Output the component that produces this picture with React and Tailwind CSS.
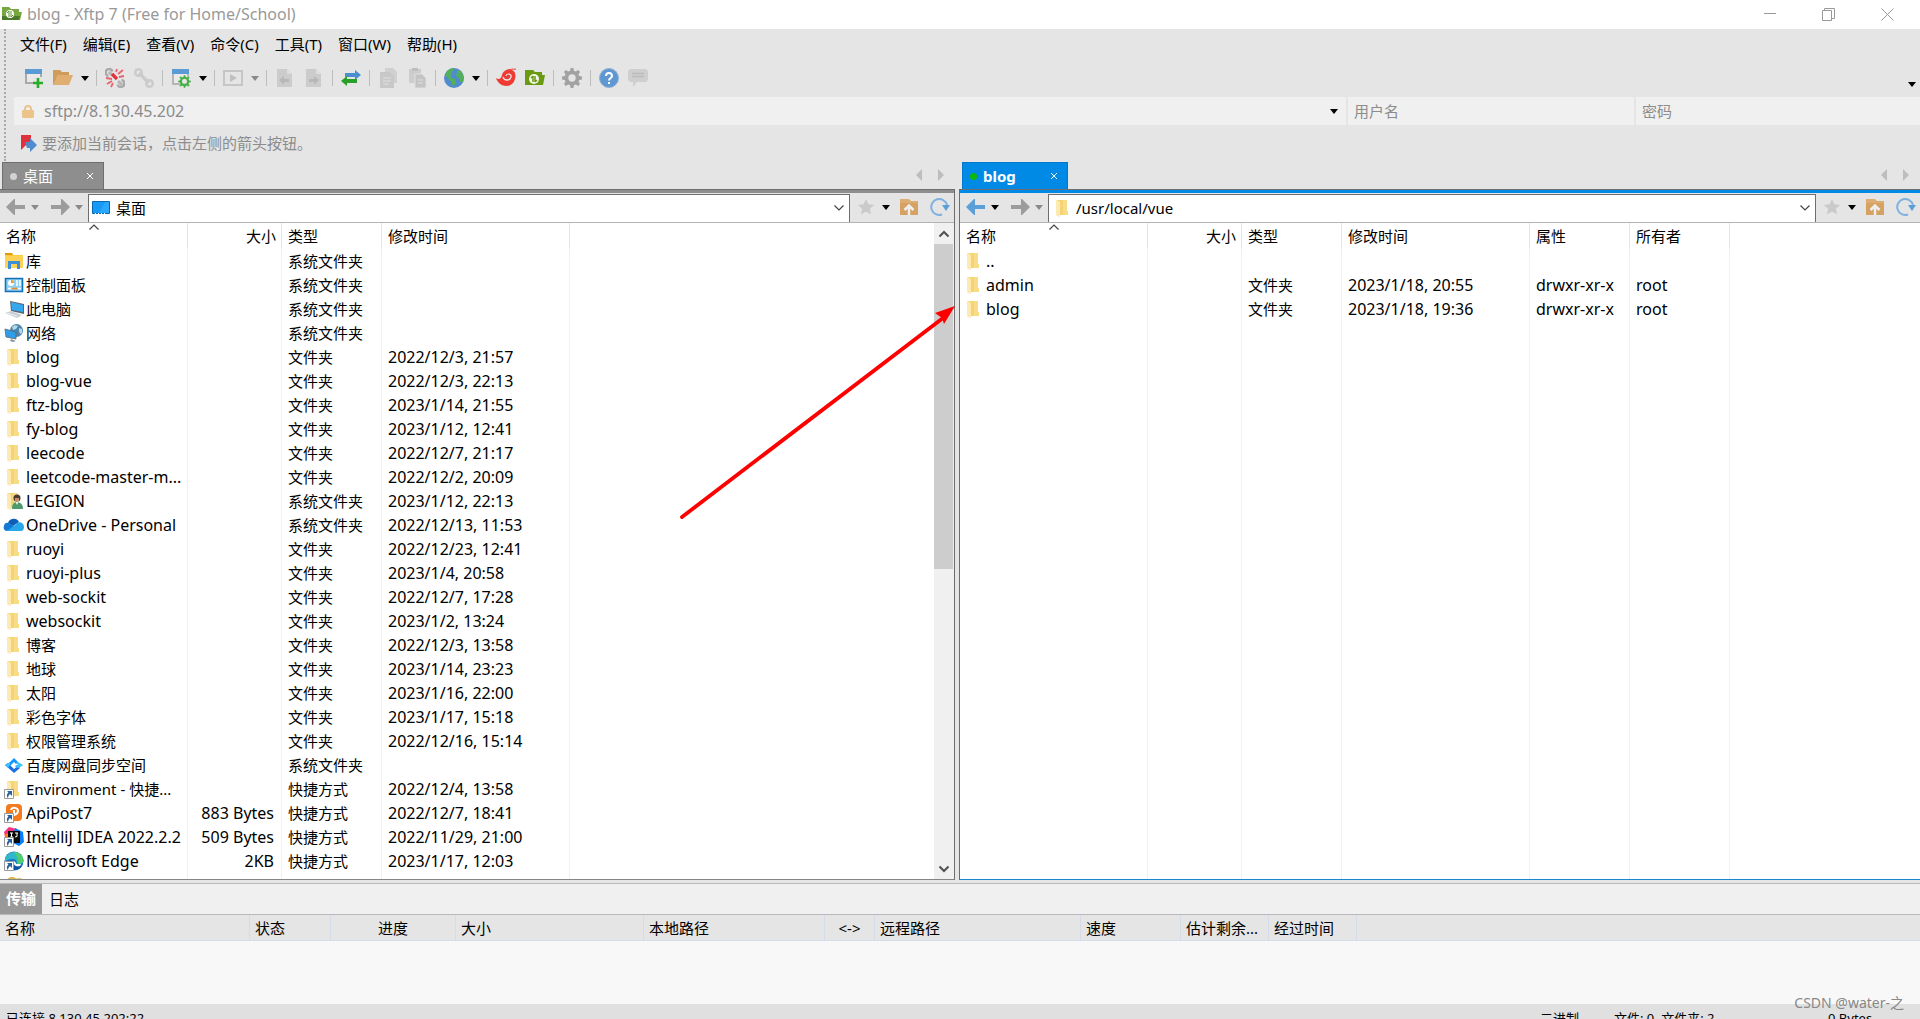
import React from 'react'
import clsx from 'clsx'

const leftFiles = [
    { icon: 'library', name: '库', type: '系统文件夹' },
    { icon: 'control', name: '控制面板', type: '系统文件夹' },
    { icon: 'computer', name: '此电脑', type: '系统文件夹' },
    { icon: 'network', name: '网络', type: '系统文件夹' },
    { icon: 'folder', name: 'blog', type: '文件夹', date: '2022/12/3, 21:57' },
    { icon: 'folder', name: 'blog-vue', type: '文件夹', date: '2022/12/3, 22:13' },
    { icon: 'folder', name: 'ftz-blog', type: '文件夹', date: '2023/1/14, 21:55' },
    { icon: 'folder', name: 'fy-blog', type: '文件夹', date: '2023/1/12, 12:41' },
    { icon: 'folder', name: 'leecode', type: '文件夹', date: '2022/12/7, 21:17' },
    { icon: 'folder', name: 'leetcode-master-m...', type: '文件夹', date: '2022/12/2, 20:09' },
    { icon: 'user', name: 'LEGION', type: '系统文件夹', date: '2023/1/12, 22:13' },
    { icon: 'onedrive', name: 'OneDrive - Personal', type: '系统文件夹', date: '2022/12/13, 11:53' },
    { icon: 'folder', name: 'ruoyi', type: '文件夹', date: '2022/12/23, 12:41' },
    { icon: 'folder', name: 'ruoyi-plus', type: '文件夹', date: '2023/1/4, 20:58' },
    { icon: 'folder', name: 'web-sockit', type: '文件夹', date: '2022/12/7, 17:28' },
    { icon: 'folder', name: 'websockit', type: '文件夹', date: '2023/1/2, 13:24' },
    { icon: 'folder', name: '博客', type: '文件夹', date: '2022/12/3, 13:58' },
    { icon: 'folder', name: '地球', type: '文件夹', date: '2023/1/14, 23:23' },
    { icon: 'folder', name: '太阳', type: '文件夹', date: '2023/1/16, 22:00' },
    { icon: 'folder', name: '彩色字体', type: '文件夹', date: '2023/1/17, 15:18' },
    { icon: 'folder', name: '权限管理系统', type: '文件夹', date: '2022/12/16, 15:14' },
    { icon: 'baidu', name: '百度网盘同步空间', type: '系统文件夹' },
    { icon: 'folderLink', name: 'Environment - 快捷...', type: '快捷方式', date: '2022/12/4, 13:58' },
    { icon: 'apipost', name: 'ApiPost7', size: '883 Bytes', type: '快捷方式', date: '2022/12/7, 18:41' },
    { icon: 'idea', name: 'IntelliJ IDEA 2022.2.2', size: '509 Bytes', type: '快捷方式', date: '2022/11/29, 21:00' },
    { icon: 'edge', name: 'Microsoft Edge', size: '2KB', type: '快捷方式', date: '2023/1/17, 12:03' },
    { icon: 'rings', name: '' },
]

const rightFiles = [
    { icon: 'folder', name: '..' },
    { icon: 'folder', name: 'admin', type: '文件夹', date: '2023/1/18, 20:55', attr: 'drwxr-xr-x', owner: 'root' },
    { icon: 'folder', name: 'blog', type: '文件夹', date: '2023/1/18, 19:36', attr: 'drwxr-xr-x', owner: 'root' },
]

const leftColumns = [
    { key: 'name', title: '名称', width: 'w-[188px]' },
    { key: 'size', title: '大小', width: 'w-[94px]' },
    { key: 'type', title: '类型', width: 'w-[100px]' },
    { key: 'date', title: '修改时间', width: 'w-[188px]' },
]

const rightColumns = [
    ...leftColumns,
    { key: 'attr', title: '属性', width: 'w-[100px]' },
    { key: 'owner', title: '所有者', width: 'w-[100px]' },
]

const transferColumns = [
    { title: '名称', width: 'w-[250px]' },
    { title: '状态', width: 'w-[81px]' },
    { title: '进度', width: 'w-[125px]', align: 'text-center' },
    { title: '大小', width: 'w-[188px]' },
    { title: '本地路径', width: 'w-[181px]' },
    { title: '<->', width: 'w-[50px]', align: 'text-center' },
    { title: '远程路径', width: 'w-[206px]' },
    { title: '速度', width: 'w-[100px]' },
    { title: '估计剩余...', width: 'w-[88px]' },
    { title: '经过时间', width: 'w-[88px]' },
]

const menus = ['文件(F)', '编辑(E)', '查看(V)', '命令(C)', '工具(T)', '窗口(W)', '帮助(H)']

const gearPath = 'M8.6 0h2.8l.5 2.7 1.9.8L16.1 2l2 2-1.6 2.2.8 1.9 2.7.5v2.8l-2.7.5-.8 1.9 1.6 2.3-2 2-2.3-1.6-1.9.8-.5 2.7H8.6l-.5-2.7-1.9-.8-2.3 1.6-2-2 1.6-2.3-.8-1.9L0 11.4V8.6l2.7-.5.8-1.9L1.9 4l2-2 2.3 1.5 1.9-.8zM10 6.3a3.7 3.7 0 1 0 0 7.4 3.7 3.7 0 0 0 0-7.4z'

const toolIcons = {
    newSession: (
        <>
            <path d="M1 2h17v14H1z" fill="#a9a9a9" />
            <path d="M1 1h17v5H1z" fill="#5b9bd5" />
            <path d="M3 6h13v8H3z" fill="#e9e9e9" />
            <path d="M9 9h10v10H9z" fill="#e5e5e5" />
            <path d="M14 10v10M9 15h10" stroke="#27ae27" strokeWidth="2.6" />
        </>
    ),
    open: (
        <>
            <path d="M0 2h7l2 2h7v3H5L1 17H0z" fill="#cf9c5c" />
            <path d="M5 7h15l-4 10H0z" fill="#dfae70" />
        </>
    ),
    disconnect: (
        <>
            <g fill="none" stroke="#a9a9a9" strokeWidth="2.4">
                <path d="M7.500 3.500a3.500 3.500 0 1 0-4 4.500" />
                <path d="M12.500 16.500a3.500 3.500 0 1 0 4-4.500" />
            </g>
            <path d="m4 4 3 3M13 13l4 4" stroke="#b5b5b5" strokeWidth="3" />
            <path d="m11 4 1-3M13 6l5-4M14 9l5-1M7 11l-6-1M7 13l-5 3M8 15l-2 4" stroke="#e8636b" strokeWidth="1.800" />
            <path d="m7 6 5 5" stroke="#e0323c" strokeWidth="3.200" />
        </>
    ),
    reconnect: (
        <g fill="none" stroke="#cbcbcb" strokeWidth="2.400">
            <circle cx="4.500" cy="4.500" r="3.300" />
            <circle cx="15.500" cy="15.500" r="3.300" />
            <path d="m5 5 10 10" strokeWidth="3.400" />
        </g>
    ),
    properties: (
        <>
            <path d="M1 1h17v16H1z" fill="#b5b5b5" />
            <path d="M1 1h17v5H1z" fill="#5b9bd5" />
            <path d="M3 6h13v9H3z" fill="#e9e9e9" />
            <g transform="translate(7 7) scale(.65)">
                <path d={gearPath} fill="#3fae3f" stroke="#e5e5e5" strokeWidth=".8" />
            </g>
        </>
    ),
    play: (
        <>
            <path d="M1 3h18v14H1z" fill="none" stroke="#c6c6c6" strokeWidth="2" />
            <path d="m7 6 7 4-7 4z" fill="#c0c0c0" />
        </>
    ),
    docLeft: (
        <>
            <path d="M2 1h10l5 5v13H2z" fill="#cccccc" />
            <path d="M12 1v5h5z" fill="#dedede" />
            <path d="m4 12 5-4v3h5v3H9v3z" fill="#b8b8b8" />
        </>
    ),
    docRight: (
        <>
            <path d="M2 1h10l5 5v13H2z" fill="#cccccc" />
            <path d="M12 1v5h5z" fill="#dedede" />
            <path d="m15 12-5-4v3H5v3h5v3z" fill="#b8b8b8" />
        </>
    ),
    transfer: (
        <>
            <path d="M4 5h10V2l6 5-6 5V9H4z" fill="#4a8fd0" />
            <path d="M16 11H6V8l-6 5 6 5v-3h10z" fill="#27a027" />
        </>
    ),
    copy: (
        <>
            <path d="M7 0h8l4 4v11H7z" fill="#d0d0d0" />
            <path d="M2 4h10l4 4v12H2z" fill="#c8c8c8" />
            <path d="M5 10h8M5 13h8M5 16h6" stroke="#e0e0e0" />
        </>
    ),
    paste: (
        <>
            <path d="M2 1h12v14H2z" fill="#cdcdcd" />
            <path d="M5 0h6v3H5z" fill="#bebebe" />
            <path d="M8 6h7l4 4v10H8z" fill="#c4c4c4" stroke="#e0e0e0" />
            <path d="M11 12h5M11 15h5" stroke="#e0e0e0" />
        </>
    ),
    globe: (
        <>
            <circle cx="10" cy="10" r="10" fill="#4f8bcd" />
            <path d="M3 3c2-2 5-3 7-3l-1 3-2 1 1 2-2 2 2 2 3 1 1 3-2 4-2-1v-3l-3-2-1-3-3-1z" fill="#53b05a" />
            <path d="m13 2 4 1 3 6-1 5-3 0-1-4-3-2 1-3z" fill="#53b05a" />
        </>
    ),
    shell: (
        <>
            <path d="M0 10c3 2 5 1 6-3 1-4 6-7 10-5 5 2 4 9 1 13-4 5-14 4-17-5z" fill="#ee3a32" />
            <path d="M10 8c1-3 6-2 5 1-1 4-7 4-8 0" fill="none" stroke="#e5e5e5" strokeWidth="1.300" />
            <circle cx="12" cy="8" r="1.500" fill="#ee3a32" />
            <path d="M13 2c4-2 6 0 7-1" stroke="#ee3a32" fill="none" />
        </>
    ),
    xftp: (
        <>
            <path d="M0 2h8l2 2h7v3h3l-2 10H0z" fill="#6a9a10" />
            <circle cx="9" cy="11" r="5" fill="#f5f8ee" />
            <path d="M8 8v6M10 8v6M6 10l2-2M12 12l-2 2" stroke="#6a9a10" strokeWidth="1.500" />
        </>
    ),
    gear: <path d={gearPath} fill="#a2a2a2" />,
    help: (
        <>
            <circle cx="10" cy="10" r="9.500" fill="#5f97d2" stroke="#8fb0d4" />
            <path d="M7 8c0-4 6-4 6 0 0 2-3 2-3 4.500M10 14v2" fill="none" stroke="#fff" strokeWidth="2" />
        </>
    ),
    chat: (
        <>
            <path d="M2 1h16l2 2v9l-2 2H9l-4 5v-5H2l-2-2V3z" fill="#cfcfcf" />
            <path d="M4 5.500h12M4 8.500h12" stroke="#bbb" strokeWidth="1.300" />
        </>
    ),
}

// 'dd' is a drop-down arrow, 'ddOff' the greyed one, '|' a separator
const toolbar = [
    'newSession', 'open', 'dd', '|', 'disconnect', 'reconnect', '|', 'properties', 'dd', '|',
    'play', 'ddOff', '|', 'docLeft', 'docRight', '|', 'transfer', '|', 'copy', 'paste', '|',
    'globe', 'dd', '|', 'shell', 'xftp', '|', 'gear', '|', 'help', 'chat',
]

const folderShape = (
    <>
        <path d="M5 2h10v11h1v4H6z" fill="#f5d273" />
        <path d="M11 2h4v11h1v4h-5z" fill="#f9dc87" />
        <path d="M4 2h1l3 2v15l-3-1-1-1z" fill="#fdeab0" />
    </>
)

const linkBadge = (
    <>
        <path d="M1.500 10.500h9v9h-9z" fill="#fff" stroke="#9a9a9a" />
        <path d="M4 12h5v5l-2-2c-1 1-2 2-2 4-2-2-1-4 .5-5.500z" fill="#2b5f9e" />
    </>
)

const fileIcons = {
    folder: folderShape,
    folderLink: <>{folderShape}{linkBadge}</>,
    library: (
        <>
            <path d="M2 2h7l1 2h10v13H2z" fill="#ffc93c" />
            <path d="M2 2h7l1 2H2z" fill="#dd9b09" />
            <path d="M2 5h18v12H2z" fill="#fed157" />
            <path d="M5 10h12v8h-3v-5H8v5H5z" fill="#3c8fd9" />
        </>
    ),
    control: (
        <>
            <path d="M2.500 3.500h17v13h-17z" fill="#8fd0f5" stroke="#1272b6" strokeWidth="1.600" />
            <circle cx="8" cy="8" r="3" fill="#fff" />
            <path d="M8 5v3h3a3 3 0 0 0-3-3z" fill="#e69a20" />
            <path d="M13 6h2M16 6h2M13 8h2M16 8h2M13 10h2M16 10h2" stroke="#fff" strokeWidth="1.300" />
            <path d="M5 13.500h3M15 13.500h3" stroke="#fff" strokeWidth="1.300" />
            <path d="M9 13.500h5" stroke="#f08a24" strokeWidth="1.600" />
        </>
    ),
    computer: (
        <>
            <path d="m7 2 14 3v10L8 12z" fill="#5a6670" />
            <path d="m8 3 12 3v7L9 11z" fill="#35a7ef" />
            <path d="m2 14 6-2 11 4-5 3z" fill="#c9ced3" />
            <path d="m4 14 10 3" stroke="#eef0f2" />
        </>
    ),
    network: (
        <>
            <circle cx="13.500" cy="7.500" r="6.500" fill="#4a86ad" />
            <path d="M9 4c2-2 4-2 6-1l-2 3-3 1zM16 5l3 1v4l-2 1-1-3z" fill="#b5d6e6" />
            <path d="m2 6 11 3v7L3 14z" fill="#2f9ee8" stroke="#5a6670" strokeWidth=".8" />
            <path d="m8 16 5 2-3 1-3-1z" fill="#8a949c" />
        </>
    ),
    user: (
        <>
            {folderShape}
            <circle cx="14" cy="7" r="3.500" fill="#4b3a33" />
            <path d="M12 7h4v3l-2 1-2-1z" fill="#c98f6b" />
            <path d="M9 18c0-5 2-7 5-7s6 2 6 7z" fill="#4d9a6d" />
            <path d="m12.500 11 1.500 3 1.500-3z" fill="#eaf3ee" />
        </>
    ),
    onedrive: (
        <>
            <path d="M5 8a6 6 0 0 1 11-1l-6 4z" fill="#0f5fb8" />
            <path d="M1 11c0-3 3-4 5-3l9 6-12 2c-2-1-3-3-2-5z" fill="#1278d4" />
            <path d="M14 8c4-2 7 1 7 4 0 2-1 4-3 4H4l8-6z" fill="#28a8ea" />
        </>
    ),
    baidu: (
        <>
            <path d="m11 3 4 4-2 2-2-2-4 4-2-2z" fill="#1596ff" />
            <path d="m2 10 3-2 6 6 4-3 2 2-6 5z" fill="#1e6fe0" />
            <path d="m15 7 5 3-4 3-4-1 1-2 2 0-2-2z" fill="#3cc0ff" />
            <path d="m7 7-5 3 3 3 2-3z" fill="#3cc0ff" />
        </>
    ),
    apipost: (
        <>
            <rect x="3" y="1" width="16" height="17" rx="4" fill="#f47a20" />
            <path d="M8 7c1-3 7-3 7 1 0 3-3 4-5 3" fill="none" stroke="#fff" strokeWidth="2" />
            <path d="M11 7v6" stroke="#fff" strokeWidth="2" />
            {linkBadge}
        </>
    ),
    idea: (
        <>
            <path d="M1 5 6 0l8 2-4 8-7 4z" fill="#f8317f" />
            <path d="m12 1 8 4 1 10-5 4-8-4z" fill="#087cfa" />
            <path d="m1 8 5-2v6z" fill="#fc801d" />
            <path d="M5 4h12v12H5z" fill="#0a0a0a" />
            <path d="M7 6h3M8.500 6v4M7 10h3M12 6h3M14 6v3.500l-2 .5" stroke="#fff" fill="none" />
            {linkBadge}
        </>
    ),
    edge: (
        <>
            <circle cx="11" cy="10" r="9.500" fill="#1b73c9" />
            <path d="M2 8a9.500 9.500 0 0 1 18.500 1c0 4-4 5-7 4 1-3-1-5-4-5-3 0-6 1-7.500 3z" fill="#2fb8c8" />
            <path d="M11 1c5 0 9 4 9.500 8 0 3-3 4-6 4 1-3 0-8-3.500-12z" fill="#52cf6b" />
            <path d="M9 12c1 3 5 4 10 3-2 3-5 4-8 4-4-1-5-5-2-7z" fill="#0f4f9e" />
            <path d="M10 10c2 0 3 2 3 3l5 0-1 2c-4 1-7-1-7-5z" fill="#fff" />
            {linkBadge}
        </>
    ),
    rings: (
        <>
            <circle cx="9" cy="7" r="4" fill="none" stroke="#ddb94a" strokeWidth="2.500" />
            <circle cx="16" cy="8" r="4" fill="none" stroke="#e6cf7c" strokeWidth="2.500" />
        </>
    ),
}

const isLatin = (text) => /^[\x20-\x7e]+$/.test(text || '')

const Triangle = ({ off }) => (
    <svg width="8" height="5" viewBox="0 0 8 5" className={clsx('shrink-0', off ? 'text-[#8a8a8a]' : 'text-black')}>
        <path d="M0 0h8L4 5z" fill="currentColor" />
    </svg>
)

const Chevron = ({ up, bold }) => (
    <svg width="12" height="8" viewBox="0 0 12 8" fill="none" className={up ? 'rotate-180' : ''}>
        <path d="m1.500 1.500 4.500 4.500 4.500-4.500" stroke={bold ? '#505050' : '#444'} strokeWidth={bold ? 2 : 1.200} />
    </svg>
)

const Arrow = ({ color, flip }) => (
    <svg width="20" height="16" viewBox="0 0 20 16" className={flip ? 'rotate-180' : ''}>
        <path d="M0 8 8 0h1v6h10v4H9v6H8z" fill={color} />
    </svg>
)

const Toolbar = () => (
    <div className="flex h-[34px] items-center pb-1 pl-[13px]">
        {toolbar.map((item, i) => {
            if (item === '|') {
                return <span key={i} className="flex w-2 justify-center"><span className="h-4 w-px bg-[#bdbdbd]" /></span>
            }
            if (item === 'dd' || item === 'ddOff') {
                return <button key={i} aria-label="more" className="flex w-[15px] justify-center"><Triangle off={item === 'ddOff'} /></button>
            }
            return (
                <button key={i} aria-label={item} className="flex w-[29px] justify-center">
                    <svg width="20" height="20" viewBox="0 0 20 20">{toolIcons[item]}</svg>
                </button>
            )
        })}
        <button aria-label="toolbar options" className="mr-1 ml-auto pt-3"><Triangle /></button>
    </div>
)

const FileTable = ({ columns, files }) => (
    <table className="h-full w-full table-fixed border-separate border-spacing-0 text-left">
        <thead>
            <tr className="h-[26px]">
                {columns.map((col) => (
                    <th
                        key={col.key}
                        className={clsx('relative border-r border-[#e5e5e5] pl-1.5 font-normal', col.width, col.key === 'size' && 'pr-[5px] text-right')}
                    >
                        {col.title}
                        {col.key === 'name' && <span className="absolute top-0 left-[88px]"><Chevron up /></span>}
                    </th>
                ))}
                <th />
            </tr>
        </thead>
        <tbody>
            {files.map((file, i) => (
                <tr key={i} className="h-6">
                    {columns.map((col) => (
                        <td
                            key={col.key}
                            className={clsx(
                                'border-r border-[#e9f3fb] whitespace-nowrap',
                                col.key === 'name' ? 'pl-[3px]' : 'pl-1.5',
                                col.key === 'size' && 'pr-[7px] text-right',
                                isLatin(file[col.key]) && 'text-[16px] leading-5',
                            )}
                        >
                            {col.key === 'name' ? (
                                <span className="flex items-center gap-px">
                                    <svg width="22" height="20" viewBox="0 0 22 20" className="shrink-0">{fileIcons[file.icon]}</svg>
                                    {file.name}
                                </span>
                            ) : file[col.key]}
                        </td>
                    ))}
                    <td />
                </tr>
            ))}
            {/* keeps the column lines running to the bottom */}
            <tr>
                {columns.map((col) => <td key={col.key} className="border-r border-[#e9f3fb]" />)}
                <td />
            </tr>
        </tbody>
    </table>
)

const ScrollBar = () => (
    <div className="flex w-5 shrink-0 flex-col bg-[#f0f0f0] pr-px">
        <button aria-label="scroll up" className="flex h-[21px] shrink-0 items-center justify-center"><Chevron up bold /></button>
        <div className="h-[325px] bg-[#cdcdcd]" />
        <button aria-label="scroll down" className="mt-auto flex h-[21px] shrink-0 items-center justify-center"><Chevron bold /></button>
    </div>
)

const Pane = ({ title, path, pathIcon, active, columns, files, scroll }) => (
    <section className="flex min-h-0 min-w-0 flex-col">
        <div className={clsx('flex h-7 items-end justify-between', active ? 'pl-[3px]' : 'pl-0.5')}>
            <div
                className={clsx(
                    'flex h-[27px] items-center border border-b-0 pl-[7px] text-white',
                    active ? 'w-[106px] border-[#0079cc] bg-[#008ae5] font-bold' : 'w-[102px] border-[#6e6e6e] bg-[#8e8e8e]',
                )}
            >
                <span className={clsx('mr-1.5 size-[7px] rounded-full', active ? 'bg-[#0bb80b]' : 'bg-[#d2d2d2]')} />
                {title}
                <button aria-label="close tab" className="mr-[9px] ml-auto">
                    <svg width="8" height="8" viewBox="0 0 8 8"><path d="m1 1 6 6M7 1 1 7" stroke="#fff" /></svg>
                </button>
            </div>
            <div className="mr-[11px] flex gap-4 self-center">
                <svg width="6" height="12" viewBox="0 0 6 12"><path d="M6 0v12L0 6z" fill="#bdbdbd" /></svg>
                <svg width="6" height="12" viewBox="0 0 6 12"><path d="M0 0v12l6-6z" fill="#bdbdbd" /></svg>
            </div>
        </div>
        <div
            className={clsx(
                'flex min-h-0 flex-1 flex-col border-t border-b border-t-[#6e6e6e]',
                active ? 'border-l border-b-[#1a86d0] border-l-[#6e6e6e]' : 'border-r border-b-[#858585] border-r-[#6e6e6e]',
            )}
        >
            <div className={clsx('h-[3px] shrink-0', active ? 'bg-[#008ae5]' : 'bg-[#8e8e8e]')} />
            <div className="flex h-[30px] shrink-0 items-stretch border-b border-[#b4b4b4] pt-px">
                <div className="flex items-center pb-0.5 pl-1.5">
                    <button aria-label="back"><Arrow color={active ? '#5b9fd8' : '#9c9c9c'} /></button>
                    <button aria-label="back list" className="flex w-[18px] justify-center"><Triangle off={!active} /></button>
                    <button aria-label="forward" className="ml-1.5"><Arrow color="#9c9c9c" flip /></button>
                    <button aria-label="forward list" className="flex w-[18px] justify-center"><Triangle off /></button>
                </div>
                <div className="flex min-w-0 flex-1 items-center border border-b-0 border-[#6e6e6e] bg-white pr-1 pb-px pl-[3px]">
                    {pathIcon}
                    <input aria-label="path" defaultValue={path} className="min-w-0 flex-1 outline-none" />
                    <button aria-label="path list"><Chevron /></button>
                </div>
                <div className="flex items-center pr-0.5 pb-0.5">
                    <button aria-label="bookmark" className="flex w-8 justify-center">
                        <svg width="18" height="18" viewBox="0 0 18 18"><path d="m9 1 2.400 5.300 5.800.6-4.300 3.900 1.200 5.700L9 13.600l-5.100 2.900 1.200-5.700L.8 6.900l5.800-.6z" fill="#cacaca" /></svg>
                    </button>
                    <button aria-label="bookmark list" className="flex w-2 justify-center"><Triangle /></button>
                    <button aria-label="up one level" className="flex w-[38px] justify-center">
                        <svg width="18" height="16" viewBox="0 0 18 16">
                            <path d="M0 0h9l2 2h7v14H0z" fill="#dcae74" />
                            <path d="M0 4h18v12H0z" fill="#d6a262" />
                            <path d="M9 6v10M4.500 11 9 6.500l4.500 4.500" stroke="#efefef" strokeWidth="2.500" fill="none" />
                        </svg>
                    </button>
                    <button aria-label="refresh" className="flex w-6 justify-center">
                        <svg width="20" height="20" viewBox="0 0 20 20">
                            <path d="M12 17.500A8 8 0 1 1 17 8" fill="none" stroke="#7fb2e0" strokeWidth="2" />
                            <path d="M12 8h8l-4 6z" fill="#5b9fd8" />
                        </svg>
                    </button>
                </div>
            </div>
            <div className="flex min-h-0 flex-1 bg-white">
                <div className="min-w-0 flex-1 overflow-hidden">
                    <FileTable columns={columns} files={files} />
                </div>
                {scroll && <ScrollBar />}
            </div>
        </div>
    </section>
)

const DesktopIcon = (
    <svg width="18" height="14" viewBox="0 0 18 14" className="mr-1.5 shrink-0">
        <path d="M.5.500h17v12h-17z" fill="#169af5" stroke="#0b68b0" />
        <path d="M7 12 13 1h4v11z" fill="#2aa8ff" />
        <path d="M3 12.500h12" stroke="#fff" strokeDasharray="1 2" />
    </svg>
)

const PathFolder = (
    <svg width="22" height="20" viewBox="0 0 22 20" className="mr-0.5 shrink-0">{folderShape}</svg>
)

const App = () => {
    return (
        <div className="relative flex h-screen flex-col overflow-hidden bg-[#e5e5e5] font-['Noto_Sans','Noto_Sans_CJK_SC',sans-serif] text-[15px] leading-5 text-black">
            <header className="flex h-[29px] shrink-0 items-center bg-white pb-px pl-0.5 text-[#999]">
                <svg width="20" height="16" viewBox="0 0 20 16" className="mr-[5px]">
                    <path d="M0 1h7l2 2h8v3h3l-2 8H0z" fill="#76a83f" />
                    <path d="M0 10h18l-1 4H0z" fill="#4d7a2a" />
                    <circle cx="8" cy="8" r="4" fill="#fff" />
                    <path d="M7 5v6M9 5v6M5 7l2-2M11 9l-2 2" stroke="#5c8f2d" />
                </svg>
                <h1 className="text-[16px] leading-5">blog - Xftp 7 (Free for Home/School)</h1>
                <div className="mr-[26px] ml-auto flex items-center gap-[46px]">
                    <button aria-label="minimize"><svg width="12" height="12" viewBox="0 0 12 12"><path d="M0 5.500h12" stroke="#999" /></svg></button>
                    <button aria-label="restore">
                        <svg width="13" height="13" viewBox="0 0 13 13" fill="none" stroke="#999"><path d="M.5 2.500h9v10h-9zM2.500 2.500v-2h10v10h-3" /></svg>
                    </button>
                    <button aria-label="close"><svg width="13" height="13" viewBox="0 0 13 13"><path d="m.5.500 12 12M12.500.500l-12 12" stroke="#999" /></svg></button>
                </div>
            </header>

            <div className="flex h-[132px] shrink-0 pl-1">
                <div className="border-l-2 border-dotted border-[#aaa]" />
                <div className="flex min-w-0 flex-1 flex-col">
                    <nav className="flex h-[34px] items-center gap-4 pb-1 pl-3.5">
                        {menus.map((menu) => <button key={menu}>{menu}</button>)}
                    </nav>
                    <Toolbar />
                    <div className="grid h-7 grid-cols-[1332fr_286fr_284fr] gap-0.5 pl-2 text-[#8c8c8c]">
                        <div className="flex items-center bg-[#f0f0f0] pr-2 pl-2">
                            <svg width="12" height="13" viewBox="0 0 12 13" className="mr-2.5 shrink-0">
                                <path d="M3 6V4a3 3 0 0 1 6 0v2" fill="none" stroke="#e9c48f" strokeWidth="2" />
                                <rect y="5" width="12" height="8" rx="1" fill="#ecc48a" />
                            </svg>
                            <input aria-label="host" defaultValue="sftp://8.130.45.202" className="min-w-0 flex-1 text-[16px] leading-5 outline-none" />
                            <button aria-label="host list"><Triangle /></button>
                        </div>
                        <input aria-label="user" placeholder="用户名" className="min-w-0 bg-[#f0f0f0] px-1.5 outline-none placeholder:text-[#8c8c8c]" />
                        <input aria-label="password" type="password" placeholder="密码" className="min-w-0 bg-[#f0f0f0] px-1.5 outline-none placeholder:text-[#8c8c8c]" />
                    </div>
                    <div className="flex flex-1 items-center pl-[15px] text-[#8c8c8c]">
                        <button aria-label="add session" className="mr-[5px]">
                            <svg width="16" height="18" viewBox="0 0 16 18">
                                <path d="M0 1h10v14l-5-4-5 5z" fill="#e0303a" />
                                <path d="M4 8h5V4l7 7-7 7v-4H6z" fill="#4f8bcd" />
                            </svg>
                        </button>
                        要添加当前会话，点击左侧的箭头按钮。
                    </div>
                </div>
            </div>

            <main className="relative grid min-h-0 flex-1 grid-cols-[955fr_961fr] grid-rows-[minmax(0,1fr)] gap-1">
                <Pane title="桌面" path="桌面" pathIcon={DesktopIcon} columns={leftColumns} files={leftFiles} scroll />
                <Pane title="blog" path="/usr/local/vue" pathIcon={PathFolder} columns={rightColumns} files={rightFiles} active />
                <svg width="276" height="216" viewBox="0 0 276 216" className="pointer-events-none absolute top-[144px] left-[679px]">
                    <path d="M3 212 264 13" stroke="#f00" strokeWidth="3.800" strokeLinecap="round" />
                    <path d="m276 1-20 7 7 5 2 6z" fill="#f00" />
                </svg>
            </main>

            <div className="mt-[3px] flex h-8 shrink-0 items-stretch border-t border-b border-[#b9b9b9] bg-[#f0f0f0]">
                <button className="bg-[#999] px-1.5 pb-0.5 font-bold text-white">传输</button>
                <button className="px-[7px]">日志</button>
            </div>
            <div className="h-[89px] shrink-0 bg-[#f8f8f8]">
                <table className="w-full table-fixed border-separate border-spacing-0 text-left">
                    <thead>
                        <tr className="h-[26px] bg-[#e5e5e5]">
                            {transferColumns.map((col) => (
                                <th
                                    key={col.title + col.width}
                                    className={clsx('border-r border-b border-[#d3dce8] font-normal whitespace-nowrap', col.width, col.align || 'pl-[5px]')}
                                >
                                    {col.title}
                                </th>
                            ))}
                            <th className="border-b border-[#d3dce8]" />
                        </tr>
                    </thead>
                </table>
            </div>
            <footer className="flex h-[15px] shrink-0 overflow-hidden bg-[#e0e0e0] pt-1.5 pl-1.5 text-[13px] leading-4 whitespace-nowrap">
                <span className="flex-1">已连接 8.130.45.202:22</span>
                <span className="w-[74px]">二进制</span>
                <span className="w-[214px]">文件: 0, 文件夹: 2</span>
                <span className="w-[92px]">0 Bytes</span>
            </footer>

            <span className="absolute right-4 bottom-1.5 text-sm text-[#888]">CSDN @water-之</span>
        </div>
    )
}

export default App
